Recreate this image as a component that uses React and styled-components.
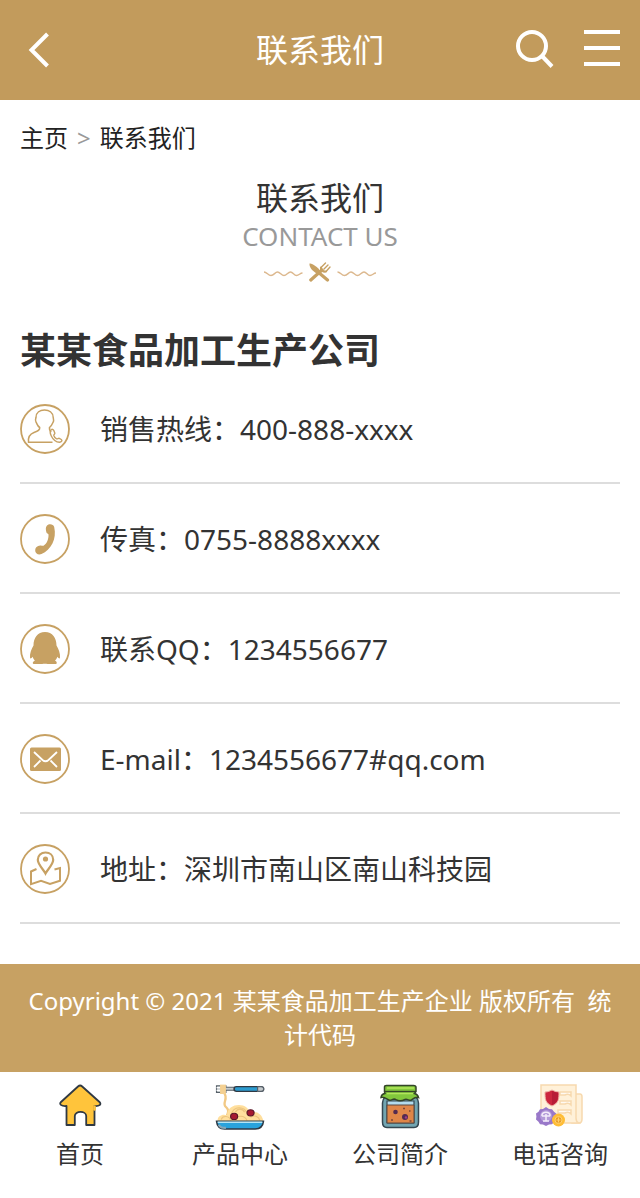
import React from 'react';
import styled, { createGlobalStyle } from 'styled-components';

const GlobalStyle = createGlobalStyle`
  * {
    box-sizing: border-box;
  }

  body {
    margin: 0;
    background: #fff;
    color: #333;
    font-family: "Noto Sans", "Noto Sans CJK SC", sans-serif;
  }

  a {
    color: inherit;
    text-decoration: none;
  }

  svg {
    display: block;
  }
`

const Header = styled.header`
  display: grid;
  grid-template-columns: 1fr auto 1fr;
  align-items: center;
  height: 100px;
  padding: 0 20px;
  background: #c29b5c;
  color: #fff;
`

const HeaderTitle = styled.div`
  font-size: 32px;
  line-height: 48px;
`

const Actions = styled.div`
  display: flex;
  justify-content: flex-end;
  gap: 30px;
`

const IconButton = styled.button`
  padding: 0;
  border: 0;
  background: none;
  color: inherit;
  cursor: pointer;
`

const Breadcrumb = styled.nav`
  display: flex;
  gap: 9px;
  padding: 20px 20px 0;
  font-size: 24px;
  line-height: 36px;
  color: #222;
`

const Separator = styled.span`
  color: #999;
`

const Heading = styled.div`
  display: flex;
  flex-direction: column;
  align-items: center;
  padding-top: 20px;
`

const Title = styled.h1`
  margin: 0;
  font-size: 32px;
  font-weight: 400;
  line-height: 44px;
`

const Subtitle = styled.div`
  margin-bottom: 10px;
  font-size: 26px;
  line-height: 32px;
  color: #999;
`

const Content = styled.main`
  padding: 46px 20px 40px;
`

const Company = styled.h2`
  margin: 0;
  font-size: 36px;
  line-height: 46px;
`

const ContactList = styled.ul`
  margin: 0;
  padding: 0;
  list-style: none;
`

const ContactItem = styled.li`
  display: flex;
  align-items: center;
  gap: 30px;
  padding: 30px 0 28px;
  border-bottom: 2px solid #ddd;
  font-size: 28px;
  line-height: 50px;
`

const Copyright = styled.footer`
  padding: 20px;
  background: #c7a163;
  color: #fff;
  font-size: 24px;
  line-height: 34px;
  text-align: center;
  white-space: break-spaces;
`

const TabBar = styled.nav`
  display: grid;
  grid-template-columns: repeat(4, 1fr);
  padding: 10px 0 26px;
`

const Tab = styled.a`
  display: flex;
  flex-direction: column;
  align-items: center;
  gap: 6px;
  font-size: 24px;
  line-height: 36px;
`

const BackIcon = () => (
  <svg width="38" height="36" viewBox="0 0 38 36" fill="none" stroke="currentColor" strokeWidth="4">
    <path d="M27.500 2 11.500 18l16 16" />
  </svg>
);

const SearchIcon = () => (
  <svg width="40" height="40" viewBox="0 0 40 40" fill="none" stroke="currentColor" strokeWidth="4">
    <circle cx="18" cy="16" r="14" />
    <path d="m28 26 10 10.500" />
  </svg>
);

const MenuIcon = () => (
  <svg width="36" height="40" viewBox="0 0 36 40" fill="none" stroke="currentColor" strokeWidth="4">
    <path d="M0 2h36M0 18h36M0 34h36" />
  </svg>
);

const Divider = () => (
  <svg width="112" height="20" viewBox="0 0 112 20" fill="none">
    <g stroke="#dcb88e" strokeWidth="1.4">
      <path d="M0 10c3 0 4 3.500 7 3.500s4-3.500 6.500-3.500 4 3.500 6.500 3.500 4-3.500 6.500-3.500 3.500 3.500 6 3.500 3.500-2.500 6-2.500" />
      <path d="M73.500 10c3 0 4 3.500 7 3.500s4-3.500 6.500-3.500 4 3.500 6.500 3.500 4-3.500 6.500-3.500 3.500 3.500 6 3.500 3.500-2.500 6-2.500" />
    </g>
    <g stroke="#c7a163" strokeLinecap="round">
      <path d="m54 10 9.500 8" strokeWidth="3.200" />
      <path d="M46.800 18 58 8" strokeWidth="3.200" />
      <path d="m57.500 5 4-4M60 7l4-4M62.500 9l3.500-4" strokeWidth="1.400" />
      <path d="M57 5.500c-.5 2.500 2 4.500 5 4" strokeWidth="2.200" />
    </g>
    <path d="M45.500 1.500c2.500-.8 8 3.500 11 7.500l-2.500 3c-5-2-9-6.500-8.500-10.500Z" fill="#c7a163" />
  </svg>
);

const RoundIcon = ({ children }) => (
  <svg width="50" height="50" viewBox="0 0 50 50" fill="none" stroke="#c7a163" strokeWidth="1.800">
    <circle cx="25" cy="25" r="24" />
    {children}
  </svg>
);

const HotlineIcon = () => (
  <RoundIcon>
    <path d="M32.500 38.200H8.500c-.7-6 1.500-8.200 5.500-9.700 4-1.500 6.200-2.500 5.700-5-2.500-1.500-2.700-4-3.700-5.500-1.200-2-.3-3 0-4.500C16 8.500 20 6 24.500 6S33 8.500 33.200 13.500c.1 1.500 1 2.800 0 4.500-.8 2-1.300 3.500-3.700 5.500-.3 2.500.5 3.500 2 4" strokeWidth="1.500" />
    <path d="M31.500 25.500c-1.700 1-1.400 4-.2 6.500 1.700 3.500 4.700 6.200 8.200 6.200 2 0 3.200-1.700 1.800-2.700l-2-1.200c-1-.4-1.700.9-2.700.5-1.500-.7-2.400-2-2.800-3.300-.2-1 1.400-1.500 1-2.500l-1-2.500c-.3-.8-1.500-1.500-2.300-1Z" strokeWidth="1.400" />
  </RoundIcon>
);

const FaxIcon = () => (
  <RoundIcon>
    <path d="M27 11.500c2-2 6.500-1.500 7.200 1.500C37 25 31 36 21.500 40c-3 1.300-6.500-.5-6.300-3.500.2-3.500 2-4.500 5-5 1.500-.3 2.300.7 3.300.2 3.500-2.200 5.200-6.700 5-11.200 0-1-2-1-2.200-2.500-.5-2.500-1-4.700.7-6.500Z" fill="#c7a163" stroke="none" />
  </RoundIcon>
);

const QQIcon = () => (
  <RoundIcon>
    <path d="M25 8c7.500 0 11.500 6 11.500 13.500 2 3.500 4 8 3.500 12-.2 1.700-1.200 1-2.700-.7-.5 2-1.200 2.700-2.300 3.900 2 .7 2.600 3.300.3 3.300h-7.500c-1.500 0-3.500-.5-5.500 0h-8c-2.500 0-1.500-2.800.6-3.300-1-1.200-1.700-1.900-2.200-3.900-1.400 1.700-2.500 2.400-2.700.7-.4-4 1.500-8.500 3.500-12C13.500 14 17.500 8 25 8Z" fill="#c7a163" stroke="none" />
  </RoundIcon>
);

const MailIcon = () => (
  <RoundIcon>
    <rect x="10" y="13.500" width="31" height="23.500" rx="1.500" fill="#c7a163" stroke="none" />
    <path d="m14 18 8.500 8c2 1.700 4 1.700 6 0l8.500-8M14 33l6.500-6.500M37 33l-6.500-6.500" stroke="#fff" />
  </RoundIcon>
);

const AddressIcon = () => (
  <RoundIcon>
    <path d="M25.500 29.500c-2-4-7.700-9-7.700-13.700 0-4.500 3.300-7.300 7.700-7.300s7.700 2.800 7.700 7.300c0 4.700-5.700 9.700-7.700 13.700Z" strokeWidth="2.200" />
    <circle cx="25.500" cy="15" r="2.600" fill="#c7a163" stroke="none" />
    <path d="m16.500 25-5.500 2.500v12.700l10-3.400 9 3.200 10-3.200V24l-5.500 1.500" strokeWidth="2" />
  </RoundIcon>
);

const HomeIcon = () => (
  <svg width="50" height="48" viewBox="0 0 50 48" strokeLinejoin="round" strokeLinecap="round">
    <path d="M23 4.500c1.500-1.300 2.800-1.300 4.200 0L44.500 20c2.500 2.500-.5 4.500-5 4v19h-8.300V34c0-5.500-11.400-5.500-11.400 0v9h-8.300V24C7 24.500 3.500 22.500 6 20Z" fill="#ffc43b" stroke="#303943" strokeWidth="1.800" />
    <path d="M39.500 24.500v3" stroke="#ffc43b" strokeWidth="2.500" />
  </svg>
);

const NoodlesIcon = () => (
  <svg width="54" height="48" viewBox="2 0 46 46" preserveAspectRatio="none">
    <path d="M11 10c5 6-2 10 2 14s1 6 1 8" fill="none" stroke="#f2c985" strokeWidth="2" />
    <path d="M6 38c-1-5 4-8 8-6 0-7 5-10 10-10s9 3 9 8c5-3 11 0 12 8Z" fill="#ffdf9d" />
    <path d="M9 36c1-4 7-4 8 1m1-6c0-8 12-9 13 0m-10 5c1-4 8-5 10 1m3-3c3-3 7-1 8 3M21 29c2-4 6-4 8 0" fill="none" stroke="#ecc47e" />
    <circle cx="20" cy="33" r="3" fill="#a61931" stroke="#5a1728" />
    <circle cx="34" cy="29.500" r="3" fill="#a61931" stroke="#5a1728" />
    <path d="M5 37.500h40c-.5 6-3.500 7.500-7 7.500H12C8.500 45 5.500 43.500 5 37.500Z" fill="#29a3dd" stroke="#303943" strokeWidth="1.300" />
    <path d="M6 38.500h38" stroke="#b6e4f3" strokeWidth="1.500" />
    <path d="M7 41c1 3 3 3 6 3" fill="none" stroke="#87a8b8" strokeWidth="2" />
    <path d="M5 3.500h8v1.500h11v3H13V10H5Z" fill="#c3c9cb" stroke="#58616a" />
    <path d="M5 5.500h6M5 8h6" stroke="#fff" strokeWidth="1.200" />
    <path d="M8 2.500h5v9H8Z" fill="#f4d091" />
    <rect x="20" y="4.500" width="25" height="4.500" rx="2" fill="#2c9cd0" stroke="#303943" strokeWidth="1.300" />
    <path d="M40 4.500h3c3 0 3 4.500 0 4.500h-3Z" fill="#c3c9cb" stroke="#58616a" />
  </svg>
);

const JarIcon = () => (
  <svg width="50" height="48" viewBox="0 0 50 48">
    <path d="M10 15h31c2 2 2.500 3 2.500 6v19c0 3.500-1.500 5.500-4.500 5.500H12c-3 0-4.500-2-4.500-5.500V21c0-3 .5-4 2.500-6Z" fill="#72a5b1" stroke="#354751" strokeWidth="1.500" />
    <path d="M12 19h27v22H12Z" fill="#b3dced" stroke="#354751" strokeWidth="1.200" />
    <path d="M12 23h27v18H12Z" fill="#df8648" stroke="#5c493f" />
    <circle cx="20.500" cy="30" r="2.300" fill="#542b50" />
    <circle cx="30" cy="35" r="3" fill="#542b50" />
    <circle cx="31" cy="35.500" r="1.200" fill="#9e3d8e" />
    <path d="M28 26.500h2M16 38h2M34.500 39h2M34 29h1.500" stroke="#7c4838" strokeWidth="1.500" />
    <path d="M9.500 5c0-1 1-1.500 2-1.500h27c1.500 0 2.500.7 2.500 2v4l-1.500 2c2.500.5 3.500 2 4 4-3-1-5 1-7 2.500s-4-1.500-6.500-.5c-3 1.500-6 2-9 .2-3-2-4 1.300-6.500.5-3-1-4.500-3.700-8.500-2.700.2-2.500 1.500-3.500 4-4L9.500 10Z" fill="#82c83c" stroke="#344529" strokeWidth="1.500" />
    <path d="M12 6h27M12 11.500h26" stroke="#b2e65b" strokeWidth="1.500" />
    <path d="M10 9.500h31" stroke="#344529" strokeWidth="1.400" />
  </svg>
);

const PhoneIcon = () => (
  <svg width="50" height="48" viewBox="0 0 50 48">
    <g fill="#fff1d9" stroke="#f7d9ae" strokeWidth="1.500">
      <path d="M40 12h5c1.500 0 2 1 2 3v22c0 3-1 4-3 4h-7Z" />
      <path d="M6 3h35v33c0 3 .8 4 2.500 5H13c-4 0-7-2-7-6Z" />
      <path d="M25 10h11v4c-2-2-4-2-6-1h-5Zm0 9h11v4c-2-2-4-2-6-1h-5Zm-2 9h13v4c-2-2-4-2-6-1h-7Z" fill="#fffaf3" />
    </g>
    <path d="M10 10c3 0 4.500-1 7-2 2.500 1 4 2 7 2 0 7 0 11-7 14-7-3-7-7-7-14Z" fill="#cc263d" stroke="#efb5a7" />
    <path d="M17 9c2.500 1 3.500 1.500 6 1.500 0 6 0 10-6 12.500Z" fill="#b71c36" />
    <path d="m11 25 3 2 3 .2 2 2.500 2.500 2-.3 3 .3 3-2.500 2-2 2.500-3 .2-3 1.600-3-1.600-3-.2-1.500-2.500L1 37.500l.4-3-.4-3 2.500-1.800L5 27.200l3-.2Z" fill="#9978c9" />
    <circle cx="11" cy="34" r="6" fill="#b39ad8" />
    <path d="M11 39v-7m-4 2c-1-5 9-5 8 0m-8 0h8m-7 5h6" fill="none" stroke="#f4edfa" strokeWidth="1.500" />
    <circle cx="23.500" cy="38" r="6.500" fill="#ffbd35" />
    <circle cx="23.500" cy="38" r="3.500" fill="#e99d25" stroke="#ffd271" />
    <path d="M23.500 35.500v5m-2-2.500h4" stroke="#ffd271" />
  </svg>
);

const contacts = [
  { icon: HotlineIcon, label: '销售热线', value: '400-888-xxxx' },
  { icon: FaxIcon, label: '传真', value: '0755-8888xxxx' },
  { icon: QQIcon, label: '联系QQ', value: '1234556677' },
  { icon: MailIcon, label: 'E-mail', value: '1234556677#qq.com' },
  { icon: AddressIcon, label: '地址', value: '深圳市南山区南山科技园' },
];

const tabs = [
  { icon: HomeIcon, label: '首页' },
  { icon: NoodlesIcon, label: '产品中心' },
  { icon: JarIcon, label: '公司简介' },
  { icon: PhoneIcon, label: '电话咨询' },
];

const App = () => {
  return (
    <>
      <GlobalStyle />
      <Header>
        <a href="#back" aria-label="返回">
          <BackIcon />
        </a>
        <HeaderTitle>联系我们</HeaderTitle>
        <Actions>
          <IconButton type="button" aria-label="搜索">
            <SearchIcon />
          </IconButton>
          <IconButton type="button" aria-label="菜单">
            <MenuIcon />
          </IconButton>
        </Actions>
      </Header>

      <Breadcrumb>
        <a href="#home">主页</a>
        <Separator>&gt;</Separator>
        <a href="#contact">联系我们</a>
      </Breadcrumb>

      <Heading>
        <Title>联系我们</Title>
        <Subtitle>CONTACT US</Subtitle>
        <Divider />
      </Heading>

      <Content>
        <Company>某某食品加工生产公司</Company>
        <ContactList>
          {contacts.map(({ icon: Icon, label, value }) => (
            <ContactItem key={label}>
              <Icon />
              <span>{label}：{value}</span>
            </ContactItem>
          ))}
        </ContactList>
      </Content>

      <Copyright>{'Copyright © 2021 某某食品加工生产企业 版权所有\u00a0 统计代码'}</Copyright>

      <TabBar>
        {tabs.map(({ icon: Icon, label }) => (
          <Tab key={label} href="#">
            <Icon />
            {label}
          </Tab>
        ))}
      </TabBar>
    </>
  );
};

export default App;
